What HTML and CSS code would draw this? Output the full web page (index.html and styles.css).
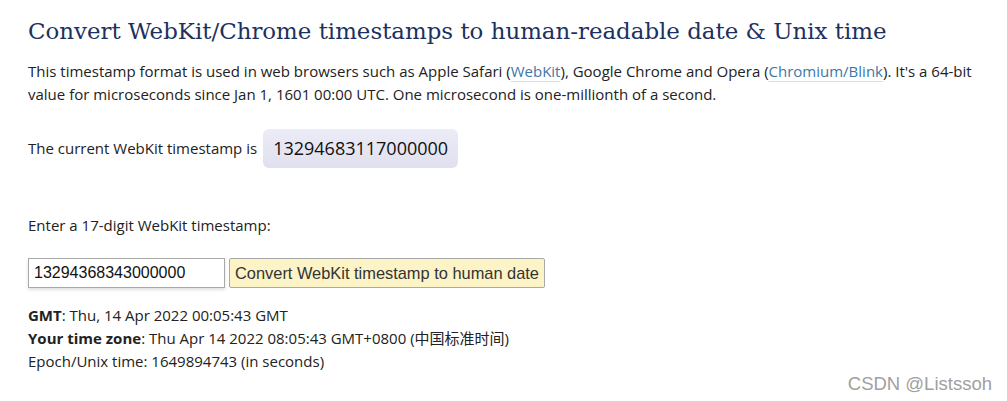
FILE: index.html
```html
<!DOCTYPE html>
<html>
<head>
<meta charset="utf-8">
<title>WebKit timestamp converter</title>
<link rel="stylesheet" href="styles.css">
</head>
<body>

<div id="main">
  <h1>Convert WebKit/Chrome timestamps to human-readable date &amp; Unix time</h1>

  <p class="intro">This timestamp format is used in web browsers such as Apple Safari (<a href="#">WebKit</a>), Google Chrome and Opera (<a href="#">Chromium/Blink</a>). It's a <span class="nw">64-bit</span> value for microseconds since Jan 1, 1601 00:00 UTC. One microsecond is one-millionth of a second.</p>

  <p class="current">The current WebKit timestamp is <span class="now">13294683117000000</span></p>

  <p class="enter">Enter a 17-digit WebKit timestamp:</p>

  <form class="convert">
    <input type="text" value="13294368343000000">
    <button type="button">Convert WebKit timestamp to human date</button>
  </form>

  <div class="result">
    <b>GMT</b>: Thu, 14 Apr 2022 00:05:43 GMT<br>
    <b>Your time zone</b>: Thu Apr 14 2022 08:05:43 GMT+0800 (中国标准时间)<br>
    Epoch/Unix time: 1649894743 (in seconds)
  </div>
</div>

<div class="mark">CSDN @Listssoh</div>

</body>
</html>
```

FILE: styles.css
```css
body{
  margin:0;
  background:#ffffff;
  font-family:"Open Sans","Noto Sans CJK SC",sans-serif;
  font-size:15px;
  line-height:23px;
  color:#222222;
}

#main{
  padding:0 28px;
}

h1{
  margin:0;
  padding-top:14px;
  font-family:"DejaVu Serif",serif;
  font-weight:normal;
  font-size:22.9px;
  line-height:34px;
  color:#1c3160;
}

p{
  margin:0;
}

p.intro{
  margin-top:12px;
}

span.nw{
  white-space:nowrap;
}

a{
  color:#3b78a8;
  text-decoration:underline;
  text-decoration-color:#dddddd;
  text-underline-offset:4px;
}

p.current{
  margin-top:23px;
  display:flex;
  align-items:center;
}

span.now{
  margin-left:6px;
  padding:8px 10px;
  font-size:18px;
  font-weight:500;
  color:#111111;
  border-radius:6px;
  background:linear-gradient(#ececf9,#e0e0ee);
}

p.enter{
  margin-top:46px;
}

form.convert{
  margin-top:21px;
  display:flex;
  gap:4px;
}

form.convert input{
  width:197px;
  height:30px;
  box-sizing:border-box;
  padding:0 5px;
  font-family:"Liberation Sans",Arial,sans-serif;
  font-size:16px;
  color:#111111;
  border:1px solid #a9a9a9;
  box-shadow:0 2px 3px rgba(0,0,0,0.12);
}

form.convert button{
  height:30px;
  padding:0 5px;
  font-family:"Liberation Sans",Arial,sans-serif;
  font-size:16.4px;
  color:#333333;
  background:#fcf3c6;
  border:1px solid #a9a9a9;
  border-radius:2px;
}

div.result{
  margin-top:16px;
}

div.result b{
  font-weight:bold;
}

.mark{
  position:absolute;
  right:15px;
  top:372px;
  font-family:"Liberation Sans",Arial,sans-serif;
  font-size:18.5px;
  color:#a0a0a0;
}
```
